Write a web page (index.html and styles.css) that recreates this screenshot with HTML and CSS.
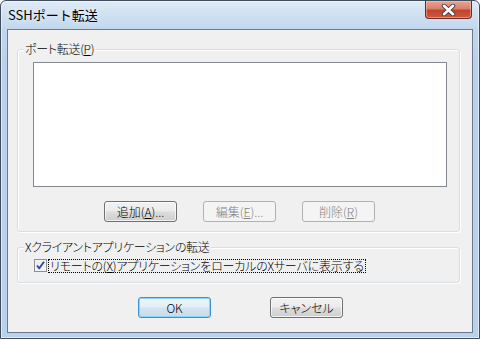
FILE: index.html
```html
<!DOCTYPE html>
<html lang="ja">
<head>
<meta charset="utf-8">
<title>SSHポート転送</title>
<link rel="stylesheet" href="styles.css">
</head>
<body>
<div class="window">
  <div class="titlebar">
    <span class="title">SSHポート転送</span>
    <div class="close">
      <svg width="17" height="12" viewBox="0 0 17 12">
        <path d="M4 1.8 L13 10.2 M13 1.8 L4 10.2" fill="none" stroke="#3b3f46" stroke-width="4.4" stroke-linecap="round"/>
        <path d="M4 1.8 L13 10.2 M13 1.8 L4 10.2" fill="none" stroke="#ffffff" stroke-width="2.6" stroke-linecap="round"/>
      </svg>
    </div>
  </div>
  <div class="client">
    <div class="group g1">
      <div class="legend">ポート転送(<u>P</u>)</div>
      <div class="listbox"></div>
      <div class="btnrow">
        <button class="btn">追加(<u>A</u>)...</button>
        <button class="btn" disabled>編集(<u>E</u>)...</button>
        <button class="btn" disabled>削除(<u>R</u>)</button>
      </div>
    </div>
    <div class="group g2">
      <div class="legend">Xクライアントアプリケーションの転送</div>
      <div class="checkrow">
        <span class="checkbox">
          <svg width="11" height="11" viewBox="0 0 11 11">
            <path d="M2 5.5 L4.3 8.3 L9 1.8" fill="none" stroke="#2a4aa0" stroke-width="1.9" stroke-linejoin="round"/>
          </svg>
        </span>
        <span class="checklabel">リモートの(<u>X</u>)アプリケーションをローカルのXサーバに表示する</span>
      </div>
    </div>
    <div class="okrow">
      <button class="btn ok">OK</button>
      <button class="btn">キャンセル</button>
    </div>
  </div>
</div>
</body>
</html>
```

FILE: styles.css
```css
html, body {
  margin: 0;
  padding: 0;
  background: #ffffff;
}

body {
  font-family: "Noto Sans CJK JP", "Noto Sans", sans-serif;
  font-size: 12px;
  font-weight: 300;
  line-height: 14px;
  color: #000;
  font-feature-settings: "palt" 1;
}

.window {
  width: 480px;
  height: 339px;
  box-sizing: border-box;
  border: 1px solid #3f4c5b;
  border-radius: 6px 6px 0 0;
  background: linear-gradient(180deg, #dfeaf6 0px, #cfe0f2 14px, #c2d7ee 28px, #b9d1ea 60px, #b9d1ea 100%);
  box-shadow: inset 0 0 0 1px rgba(255, 255, 255, 0.55);
  display: flex;
  flex-direction: column;
  overflow: hidden;
}

.titlebar {
  height: 28px;
  display: flex;
  justify-content: space-between;
  align-items: flex-start;
}

.title {
  padding: 6px 0 0 7px;
  font-size: 13px;
  line-height: 15px;
  font-weight: 400;
  font-feature-settings: normal;
  color: #000;
  text-shadow: 0 0 6px rgba(255, 255, 255, 0.9);
}

.close {
  width: 45px;
  height: 17px;
  margin-right: 7px;
  border: 1px solid #6d2a21;
  border-top: none;
  border-radius: 0 0 4px 4px;
  background: linear-gradient(180deg, #e8a594 0%, #d9806c 45%, #c3432b 55%, #cc5a3f 100%);
  box-shadow: inset 0 0 0 1px rgba(255, 210, 200, 0.45);
  display: flex;
  align-items: center;
  justify-content: center;
}

.client {
  margin: 0 6px;
  height: 302px;
  border: 1px solid #6b7b8e;
  background: #f0f0f0;
  display: flex;
  flex-direction: column;
}

.group {
  margin-left: 9px;
  width: 441px;
  border: 1px solid #d5dfe5;
  border-radius: 3px;
  box-shadow: inset 1px 1px 0 #ffffff, 1px 1px 0 #ffffff;
  display: flex;
  flex-direction: column;
}

.g1 {
  margin-top: 19px;
  height: 181px;
}

.g2 {
  margin-top: 15px;
  height: 34px;
}

.legend {
  align-self: flex-start;
  margin: -8px 0 0 6px;
  padding: 0 1px;
  height: 14px;
  background: #f0f0f0;
  white-space: nowrap;
  letter-spacing: -0.3px;
}

.listbox {
  margin: 6px 0 0 15px;
  width: 414px;
  height: 125px;
  box-sizing: border-box;
  border: 1px solid #828790;
  background: #ffffff;
}

.btnrow {
  margin: 14px 0 0 86px;
  display: flex;
  gap: 26px;
}

.btn {
  width: 73px;
  height: 21px;
  box-sizing: border-box;
  padding: 0;
  border: 1px solid #707070;
  border-radius: 3px;
  background: linear-gradient(180deg, #f2f2f2 0%, #ebebeb 48%, #dddddd 52%, #cfcfcf 100%);
  box-shadow: inset 0 0 0 1px rgba(255, 255, 255, 0.7);
  font-family: "Noto Sans CJK JP", "Noto Sans", sans-serif;
  font-size: 12px;
  font-weight: 300;
  font-feature-settings: "palt" 1;
  line-height: 14px;
  color: #000;
}

.btn:disabled {
  border-color: #adb2b5;
  background: #f4f4f4;
  box-shadow: none;
  color: #838383;
}

.btn u {
  text-underline-offset: 1px;
}

.checkrow {
  margin: 5px 0 0 16px;
  display: flex;
  align-items: flex-start;
  gap: 1px;
}

.checkbox {
  width: 13px;
  height: 13px;
  box-sizing: border-box;
  border: 1px solid #8e8f8f;
  background: linear-gradient(135deg, #e8eaed 0%, #f8f8f8 100%);
  box-shadow: inset 0 0 0 1px #f4f4f4;
  display: flex;
  align-items: center;
  justify-content: center;
}

.checklabel {
  border: 1px dotted #000;
  padding: 0 1px;
  height: 12px;
  line-height: 12px;
  white-space: nowrap;
  letter-spacing: -0.2px;
}

.okrow {
  margin: 14px 0 0 130px;
  display: flex;
  gap: 59px;
}

.btn.ok {
  border-color: #3c8fd0;
  background: linear-gradient(180deg, #edf5fa 0%, #e2eef6 48%, #d3e3ef 52%, #c8dbe9 100%);
  box-shadow: inset 0 0 0 1px #8ed6f6;
}
```
